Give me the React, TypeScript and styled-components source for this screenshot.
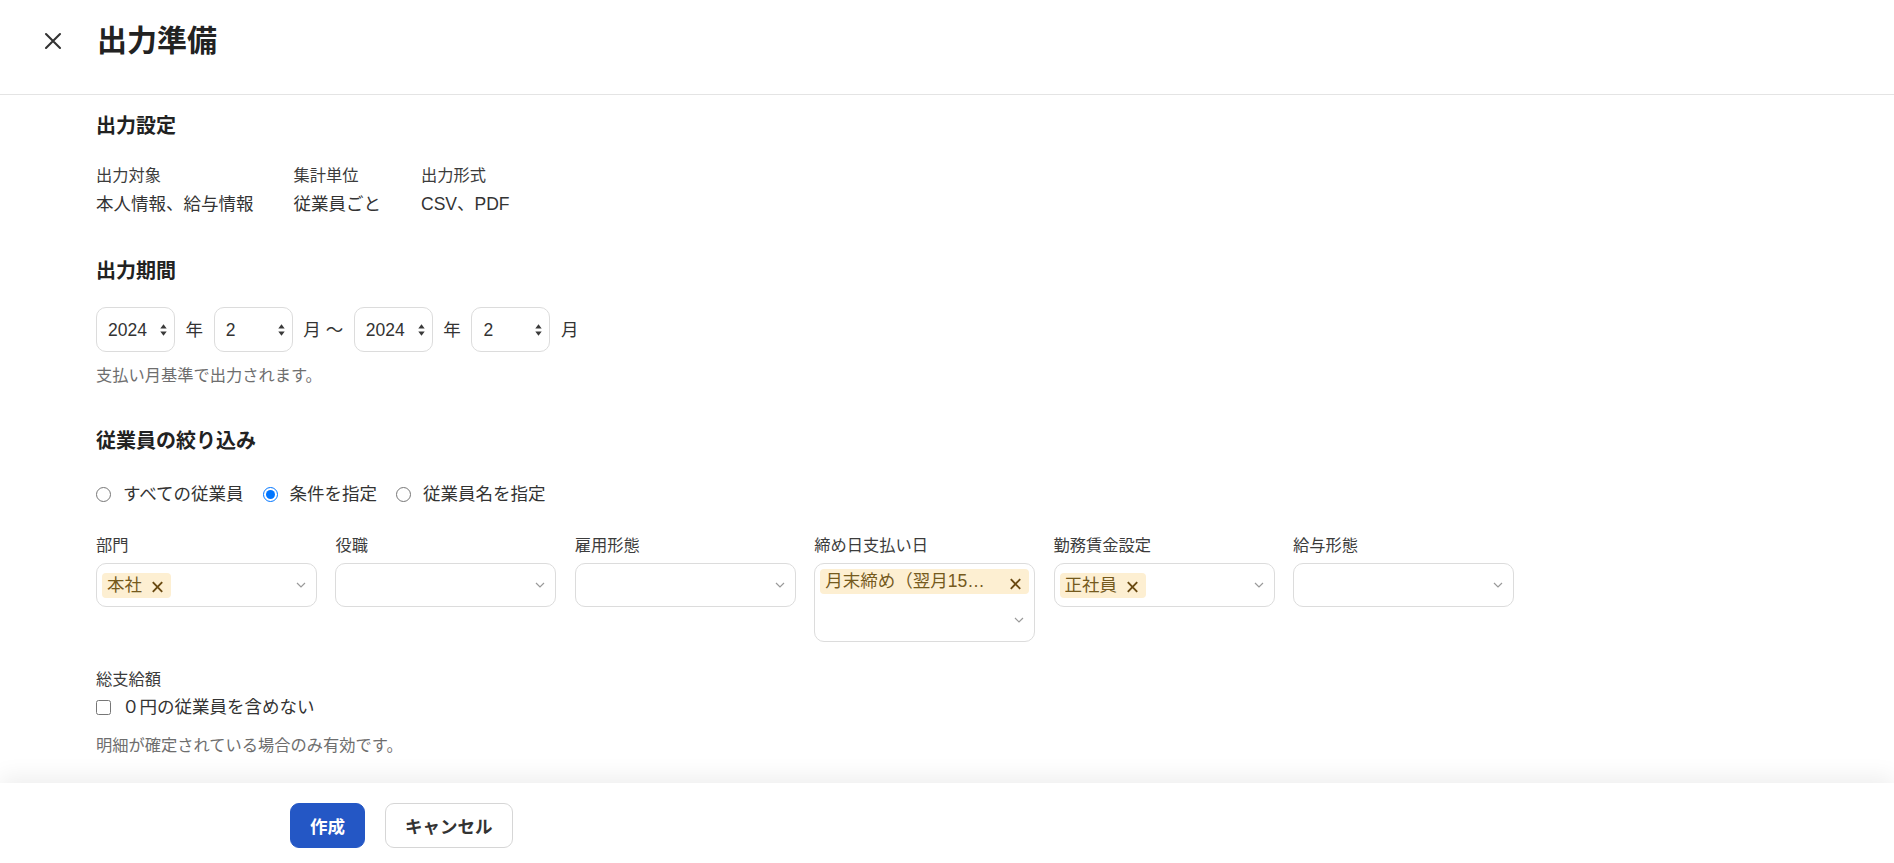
import React, { useState } from "react";
import styled, { createGlobalStyle } from "styled-components";

const GlobalStyle = createGlobalStyle`
  html, body { margin: 0; padding: 0; background: #fff; }
  body {
    font-family: "Liberation Sans", "Noto Sans CJK JP", sans-serif;
    color: #333;
  }
  *, *::before, *::after { box-sizing: border-box; }
`;

const Page = styled.div`
  height: 100vh;
  display: flex;
  flex-direction: column;
  overflow: hidden;
`;

const Header = styled.header`
  flex: 0 0 95px;
  display: flex;
  align-items: center;
  padding: 0 0 12px 44px;
  border-bottom: 1px solid #e4e4e4;
`;

const CloseButton = styled.button`
  display: flex;
  width: 18px;
  height: 18px;
  padding: 0;
  border: none;
  background: transparent;
  color: #333;
  cursor: pointer;
`;

const Title = styled.h1`
  margin: 0 0 0 35px;
  font-size: 30px;
  line-height: 36px;
  font-weight: 700;
  color: #222;
`;

const Main = styled.main`
  flex: 1;
  overflow: hidden;
  padding: 17px 0 0 96px;
`;

const Section = styled.section`
  & + & {
    margin-top: 40px;
  }
`;

const SectionTitle = styled.h2`
  margin: 0;
  font-size: 20px;
  line-height: 28px;
  font-weight: 700;
  color: #222;
`;

const InfoRow = styled.div`
  display: flex;
  gap: 40px;
  margin-top: 23px;
`;

const InfoItem = styled.div`
  display: flex;
  flex-direction: column;
  gap: 4px;
`;

const SmallLabel = styled.div`
  font-size: 16.25px;
  line-height: 24px;
  color: #3c3c3c;
`;

const InfoValue = styled.div`
  font-size: 17.5px;
  line-height: 26px;
  color: #333;
`;

const PeriodRow = styled.div`
  display: flex;
  align-items: center;
  gap: 10.6px;
  margin-top: 22px;
`;

const SelectWrap = styled.div`
  position: relative;
  width: 79px;
  height: 45px;
`;

const NativeSelect = styled.select`
  appearance: none;
  width: 100%;
  height: 100%;
  padding: 0 0 0 11px;
  border: 1px solid #dcdcdc;
  border-radius: 10px;
  background: #fff;
  font-family: inherit;
  font-size: 17.5px;
  color: #333;
  outline: none;
`;

const SpinArrows = styled.svg`
  position: absolute;
  right: 8px;
  top: 50%;
  transform: translateY(-50%);
  pointer-events: none;
`;

const Unit = styled.span`
  font-size: 17.5px;
  line-height: 26px;
  color: #333;
`;

const Helper = styled.p<{ $gap: number }>`
  margin: ${(p) => p.$gap}px 0 0;
  font-size: 16.25px;
  line-height: 24px;
  color: #6e6e6e;
`;

const RadioRow = styled.div`
  display: flex;
  align-items: center;
  gap: 19px;
  margin-top: 26px;
`;

const ChoiceLabel = styled.label<{ $gap: number }>`
  display: inline-flex;
  align-items: center;
  gap: ${(p) => p.$gap}px;
  font-size: 17.5px;
  line-height: 26px;
  color: #333;
  cursor: pointer;

  input {
    width: 15px;
    height: 15px;
    margin: 0;
  }
`;

const FilterGrid = styled.div`
  display: grid;
  grid-template-columns: repeat(6, 221px);
  column-gap: 18.4px;
  align-items: start;
  margin-top: 26px;
`;

const Field = styled.div`
  display: flex;
  flex-direction: column;
  gap: 6px;
`;

const Control = styled.div`
  display: flex;
  flex-wrap: wrap;
  align-items: center;
  min-height: 44px;
  padding-left: 5px;
  border: 1px solid #dcdcdc;
  border-radius: 10px;
  background: #fff;
`;

const Tag = styled.span`
  display: flex;
  align-items: center;
  max-width: calc(100% - 5px);
  height: 25px;
  margin: 5px 5px 5px 0;
  padding: 0 7px 0 5px;
  border-radius: 4px;
  background: #fdefd2;
  color: #755a1d;
  font-size: 17.5px;
  line-height: 25px;
`;

const TagText = styled.span<{ $reserve: number }>`
  flex: 0 1 auto;
  min-width: 0;
  margin-right: ${(p) => p.$reserve}px;
  overflow: hidden;
  white-space: nowrap;
  text-overflow: ellipsis;
`;

const TagRemove = styled.svg`
  flex-shrink: 0;
  margin: 4px 0 0 auto;
`;

const Indicator = styled.span`
  display: flex;
  align-items: center;
  justify-content: center;
  flex-shrink: 0;
  width: 30px;
  height: 42px;
  margin-left: auto;
`;

const AmountBlock = styled.div`
  margin-top: 25px;
`;

const CheckRow = styled.div`
  margin-top: 3px;
`;

const Footer = styled.footer`
  position: relative;
  flex: 0 0 80px;
  display: flex;
  align-items: flex-start;
  gap: 20px;
  padding: 20px 0 0 290px;
  background: #fff;
  box-shadow: 0 -6px 22px rgba(0, 0, 0, 0.07);
`;

const Button = styled.button<{ $primary?: boolean }>`
  height: 45px;
  padding: 0 19px;
  border-radius: 9px;
  border: 1px solid ${(p) => (p.$primary ? "#2457c5" : "#d6d6d6")};
  background: ${(p) => (p.$primary ? "#2457c5" : "#fff")};
  color: ${(p) => (p.$primary ? "#fff" : "#333")};
  font-family: inherit;
  font-size: 17.5px;
  font-weight: 700;
  cursor: pointer;
`;

const CloseIcon = () => (
  <svg width="18" height="18" viewBox="0 0 18 18">
    <path d="M2 2L16 16M16 2L2 16" stroke="currentColor" strokeWidth="2.1" strokeLinecap="round" fill="none" />
  </svg>
);

const Chevron = () => (
  <svg width="10" height="6" viewBox="0 0 10 6">
    <path d="M1 1l4 4 4-4" stroke="#9a9a9a" strokeWidth="1.2" fill="none" />
  </svg>
);

const PeriodSelect = ({ value, options }: { value: string; options: string[] }) => (
  <SelectWrap>
    <NativeSelect defaultValue={value}>
      {options.map((o) => (
        <option key={o} value={o}>
          {o}
        </option>
      ))}
    </NativeSelect>
    <SpinArrows width="7" height="14" viewBox="0 0 7 14">
      <path d="M0.3 5.6L3.5 1.2L6.7 5.6Z M0.3 8.4L3.5 12.8L6.7 8.4Z" fill="#3a3a3a" />
    </SpinArrows>
  </SelectWrap>
);

const MultiSelect = ({ tags, truncated }: { tags: string[]; truncated?: boolean }) => (
  <Control>
    {tags.map((t) => (
      <Tag key={t}>
        <TagText $reserve={truncated ? 18 : 9}>{t}</TagText>
        <TagRemove width="13" height="12" viewBox="0 0 13 12">
          <path d="M1.8 1.2l9.4 9.6M11.2 1.2l-9.4 9.6" stroke="#6a4a12" strokeWidth="1.9" fill="none" />
        </TagRemove>
      </Tag>
    ))}
    <Indicator>
      <Chevron />
    </Indicator>
  </Control>
);

const years = ["2022", "2023", "2024", "2025"];
const months = Array.from({ length: 12 }, (_, i) => String(i + 1));

const filters = [
  { label: "部門", tags: ["本社"] },
  { label: "役職", tags: [] },
  { label: "雇用形態", tags: [] },
  { label: "締め日支払い日", tags: ["月末締め（翌月15日支払い）"], truncated: true },
  { label: "勤務賃金設定", tags: ["正社員"] },
  { label: "給与形態", tags: [] },
];

export default function App() {
  const [target, setTarget] = useState("condition");

  return (
    <>
      <GlobalStyle />
      <Page>
        <Header>
          <CloseButton aria-label="閉じる">
            <CloseIcon />
          </CloseButton>
          <Title>出力準備</Title>
        </Header>

        <Main>
          <Section>
            <SectionTitle>出力設定</SectionTitle>
            <InfoRow>
              <InfoItem>
                <SmallLabel>出力対象</SmallLabel>
                <InfoValue>本人情報、給与情報</InfoValue>
              </InfoItem>
              <InfoItem>
                <SmallLabel>集計単位</SmallLabel>
                <InfoValue>従業員ごと</InfoValue>
              </InfoItem>
              <InfoItem>
                <SmallLabel>出力形式</SmallLabel>
                <InfoValue>CSV、PDF</InfoValue>
              </InfoItem>
            </InfoRow>
          </Section>

          <Section>
            <SectionTitle>出力期間</SectionTitle>
            <PeriodRow>
              <PeriodSelect value="2024" options={years} />
              <Unit>年</Unit>
              <PeriodSelect value="2" options={months} />
              <Unit>月 〜</Unit>
              <PeriodSelect value="2024" options={years} />
              <Unit>年</Unit>
              <PeriodSelect value="2" options={months} />
              <Unit>月</Unit>
            </PeriodRow>
            <Helper $gap={11}>支払い月基準で出力されます。</Helper>
          </Section>

          <Section>
            <SectionTitle>従業員の絞り込み</SectionTitle>
            <RadioRow>
              {[
                { id: "all", text: "すべての従業員" },
                { id: "condition", text: "条件を指定" },
                { id: "name", text: "従業員名を指定" },
              ].map((r) => (
                <ChoiceLabel key={r.id} $gap={12}>
                  <input
                    type="radio"
                    name="target"
                    checked={target === r.id}
                    onChange={() => setTarget(r.id)}
                  />
                  {r.text}
                </ChoiceLabel>
              ))}
            </RadioRow>

            <FilterGrid>
              {filters.map((f) => (
                <Field key={f.label}>
                  <SmallLabel>{f.label}</SmallLabel>
                  <MultiSelect tags={f.tags} truncated={f.truncated} />
                </Field>
              ))}
            </FilterGrid>

            <AmountBlock>
              <SmallLabel>総支給額</SmallLabel>
              <CheckRow>
                <ChoiceLabel $gap={11}>
                  <input type="checkbox" />
                  ０円の従業員を含めない
                </ChoiceLabel>
              </CheckRow>
              <Helper $gap={13}>明細が確定されている場合のみ有効です。</Helper>
            </AmountBlock>
          </Section>
        </Main>

        <Footer>
          <Button $primary>作成</Button>
          <Button>キャンセル</Button>
        </Footer>
      </Page>
    </>
  );
}
